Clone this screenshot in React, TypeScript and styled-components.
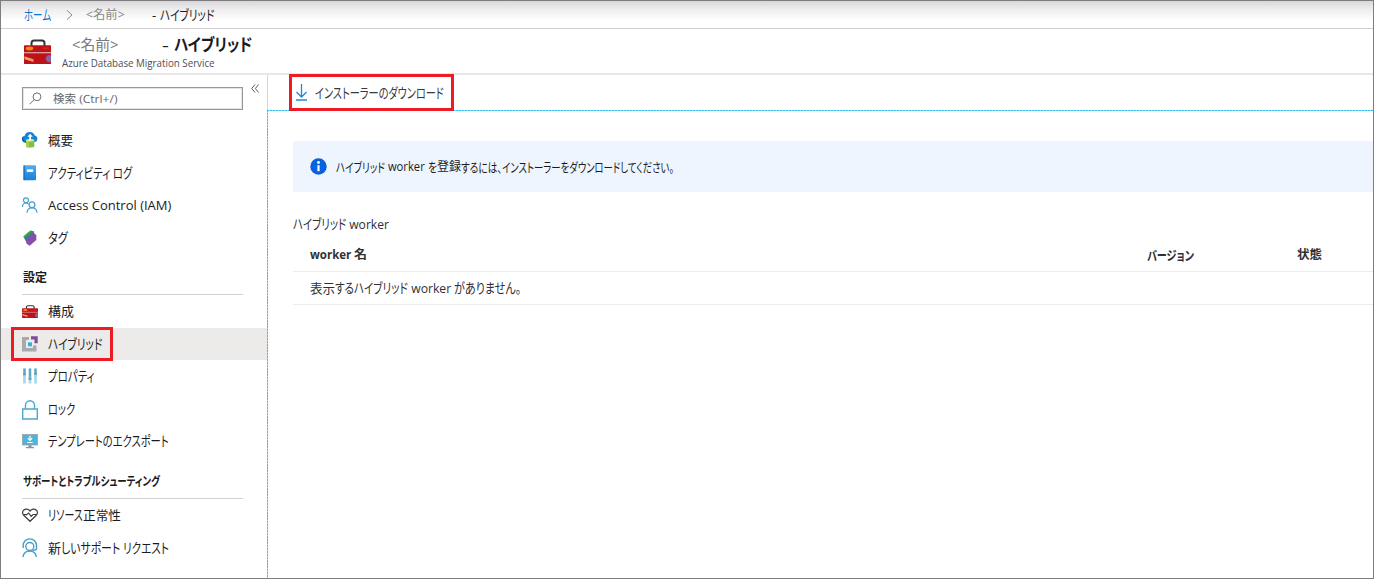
import React, { useLayoutEffect, useRef, useState } from "react";
import styled, { createGlobalStyle } from "styled-components";

const GlobalStyle = createGlobalStyle`
  * { box-sizing: border-box; }
  body { margin: 0; background: #fff; }
`;

const Page = styled.div`
  width: 1374px;
  height: 579px;
  border: 1px solid #7f7d80;
  background: #fff;
  color: #1b1b1f;
  font-family: "Open Sans", "Noto Sans CJK JP", sans-serif;
  font-size: 13px;
  display: flex;
  flex-direction: column;
  overflow: hidden;
`;

const Run = styled.span<{ $w: number }>`
  flex: none;
  display: block;
  width: ${(p) => p.$w}px;
  height: 20px;
  white-space: pre;
`;
const RunInner = styled.span<{ $kana: boolean }>`
  display: inline-block;
  transform-origin: left center;
  font-feature-settings: "palt";
  font-size: ${(p) => (p.$kana ? "1.08em" : "1em")};
  line-height: 20px;
  vertical-align: top;
`;
const Line = styled.span<{ $size?: number; $bold?: boolean; $color?: string; $ml?: number }>`
  display: flex;
  flex: none;
  line-height: 20px;
  font-size: ${(p) => p.$size ?? 13}px;
  font-weight: ${(p) => (p.$bold ? 700 : 400)};
  color: ${(p) => p.$color ?? "inherit"};
  margin-left: ${(p) => p.$ml ?? 0}px;
`;

const KANA = /^[\u3000-\u30ff\s]+$/;

function Fit({ w, children }: { w: number; children: string }) {
  const ref = useRef<HTMLSpanElement>(null);
  const [scale, setScale] = useState(1);
  useLayoutEffect(() => {
    if (ref.current) setScale(w / ref.current.offsetWidth);
  }, [w, children]);
  return (
    <Run $w={w}>
      <RunInner ref={ref} $kana={KANA.test(children)} style={{ transform: `scaleX(${scale})` }}>{children}</RunInner>
    </Run>
  );
}

type Seg = [string, number];
const Segs = ({ items }: { items: Seg[] }) => (
  <>{items.map(([t, w], i) => <Fit key={i} w={w}>{t}</Fit>)}</>
);

/* ---- header ---- */
const Breadcrumb = styled.nav`
  height: 28px;
  flex: none;
  display: flex;
  align-items: center;
  padding-left: 23px;
  border-bottom: 1px solid #d2d0d2;
  background: linear-gradient(#d9d7d9 0, #eeedee 8px, #fff 20px);
`;
const Chevron = styled.svg`
  flex: none;
  margin: 0 13px 0 15px;
`;
const Header = styled.header`
  height: 46px;
  flex: none;
  display: flex;
  padding: 7px 0 0 23px;
  border-bottom: 2px solid #e9e8e9;
`;
const HeaderIcon = styled.div`
  width: 38px;
  padding-top: 3px;
`;
const Titles = styled.div`
  display: flex;
  flex-direction: column;
`;
const TitleRow = styled.div`
  display: flex;
  height: 17px;
  align-items: center;
`;

/* ---- sidebar ---- */
const Body = styled.div`
  flex: 1;
  display: flex;
  min-height: 0;
`;
const Sidebar = styled.aside`
  width: 266px;
  flex: none;
`;
const SearchRow = styled.div`
  height: 49px;
  display: flex;
  align-items: flex-start;
  padding: 12px 0 0 21px;
`;
const SearchBox = styled.div`
  width: 221px;
  height: 23px;
  border: 1px solid #979797;
  outline: 1px solid #e4e4e4;
  outline-offset: -2px;
  display: flex;
  align-items: center;
  padding-left: 6px;
`;
const Collapse = styled.svg`
  margin: -3px 0 0 8px;
`;
const Item = styled.div<{ $active?: boolean }>`
  height: 32.5px;
  display: flex;
  align-items: center;
  padding-left: 21px;
  position: relative;
  background: ${(p) => (p.$active ? "#ecebea" : "transparent")};
`;
const IconSlot = styled.span`
  width: 26px;
  flex: none;
  display: flex;
  svg { display: block; overflow: visible; }
`;
const GroupTitle = styled.div<{ $h: number }>`
  width: 221px;
  height: ${(p) => p.$h}px;
  margin-left: 21px;
  padding: 0 0 6px 1px;
  display: flex;
  align-items: flex-end;
  border-bottom: 1px solid #d3d2d2;
`;
const Highlight = styled.span<{ $x: number; $y: number; $w: number; $h: number }>`
  position: absolute;
  left: ${(p) => p.$x}px;
  top: ${(p) => p.$y}px;
  width: ${(p) => p.$w}px;
  height: ${(p) => p.$h}px;
  border: 3px solid #ed1c24;
`;

/* ---- content ---- */
const Main = styled.main`
  flex: 1;
  min-width: 0;
  display: flex;
  flex-direction: column;
`;
const Toolbar = styled.div`
  height: 35px;
  flex: none;
  position: relative;
  display: flex;
  align-items: center;
  padding-left: 27px;
  border-left: 1px solid #d6d5d6;
`;
const Blade = styled.section`
  flex: 1;
  padding: 31px 0 0 26px;
  background:
    repeating-linear-gradient(90deg, #2fc0f0 0 2px, #9be0f6 2px 3px) top left / 100% 1px no-repeat,
    repeating-linear-gradient(#2fc0f0 0 2px, #9be0f6 2px 3px) top left / 1px 100% no-repeat;
`;
const Banner = styled.div`
  height: 51px;
  background: #eef5fe;
  display: flex;
  align-items: center;
  padding-left: 17px;
`;
const SectionTitle = styled.div`
  height: 42px;
  padding-top: 22px;
  display: flex;
`;
const Row = styled.div<{ $h: number; $drop?: number }>`
  height: ${(p) => p.$h}px;
  display: grid;
  grid-template-columns: 837px 150px 1fr;
  align-items: center;
  padding: ${(p) => p.$drop ?? 0}px 0 0 17px;
  border-bottom: 1px solid #eeedee;
`;

/* ---- icons ---- */
const Toolbox = ({ w, h }: { w: number; h: number }) => (
  <svg width={w} height={h} viewBox="0 0 27 24" preserveAspectRatio="none">
    <path d="M7.500 7V4a2.500 2.500 0 0 1 2.500-2.500h8A2.500 2.500 0 0 1 20.500 4v3" fill="none" stroke="#333439" strokeWidth="2" />
    <rect y="6" width="27" height="18" rx=".8" fill="#bd1218" />
    <path d="M0 12.700h27v1H0z" fill="#e6c3c2" />
    <ellipse cx="5.500" cy="9.200" rx="3.800" ry="1.900" fill="#f58a12" />
    <path d="M.5 16.500l9 3v2.500L.5 19.500z" fill="#f29a68" />
    <path d="M19 8h6v2h-6z" fill="#d32120" />
    <path d="M27 16a3.400 3.400 0 1 0 0 5.800z" fill="#8365ad" />
  </svg>
);
const CloudBox = () => (
  <svg width="16" height="16" viewBox="0 0 16 16">
    <path d="M3.200 10A3 3 0 0 1 2.600 4 5.300 5.300 0 0 1 12.800 3.600a3.300 3.300 0 0 1 .2 6.400z" fill="#1384d8" />
    <path d="M1.200 5.500a3 3 0 0 0 2 4.500h1.500" fill="none" stroke="#0b63b4" strokeWidth="1.500" />
    <path d="M4 8h8.300v6.600c0 1.300-8.300 1.300-8.300 0z" fill="#84bd4c" />
    <path d="M4 8h3v7.500c-1.800 0-3-.4-3-1z" fill="#a9cf46" />
    <ellipse cx="8.150" cy="8.200" rx="4.150" ry="1.300" fill="#d6ea8f" />
    <path d="M8.100 1.800l2.700 3H9V8.600H7.200V4.800H5.400z" fill="#fff" />
  </svg>
);
const Book = () => (
  <svg width="16" height="16" viewBox="0 0 16 16">
    <defs>
      <linearGradient id="book" x1="0" y1="0" x2="0" y2="1">
        <stop offset="0" stopColor="#5aaeea" /><stop offset=".5" stopColor="#2f93e4" /><stop offset="1" stopColor="#1d7fd8" />
      </linearGradient>
    </defs>
    <rect x="1.500" y=".3" width="12.500" height="15" rx=".8" fill="url(#book)" />
    <path d="M1.500.5h1.300v14.800H1.500z" fill="#1971c6" />
    <rect x="4.800" y="4.300" width="6.400" height="2.600" rx=".3" fill="#f3f9fe" />
  </svg>
);
const People = () => (
  <svg width="16" height="16" viewBox="0 0 16 16" fill="none" stroke="#459fcd" strokeWidth="1.200">
    <circle cx="4" cy="3.300" r="2.500" />
    <path d="M.4 10c.2-2.500 1.600-4 3.600-4 1.300 0 2.200.6 2.900 1.500" />
    <circle cx="10" cy="7.800" r="2.900" />
    <path d="M5 15.800c.2-3 2.200-5 5-5s4.800 2 5 5" />
  </svg>
);
const Tag = () => (
  <svg width="16" height="16" viewBox="0 0 16 16">
    <path d="M1.200 6.500L8.300.5l3.700.8v4L5 13z" fill="#3f9d42" />
    <path d="M2.500 8.500L10 2.200l2.500.8v5L6 14z" fill="#3d74b8" />
    <path d="M4 9.800L11.300 3.600l3 1.200V10L7.800 15.700 4.600 13.800z" fill="#8650a8" />
  </svg>
);
const Hybrid = () => (
  <svg width="16" height="16" viewBox="0 0 16 16">
    <path d="M0 1h7v3H4v8h7V9.500h3.500V15.500H0z" fill="#a9a9ab" />
    <path d="M9 .3h6.700v7h-3.200V3.600H9z" fill="#8049a0" />
    <path d="M5.500 5.500h5v5h-5z" fill="#e6f3f8" />
    <path d="M6 6.300h4v4H6z" fill="#35aee0" />
  </svg>
);
const Sliders = () => (
  <svg width="16" height="16" viewBox="0 0 16 16">
    <path d="M2.500.5v15M8 .5v15M13.500.5v15" stroke="#a9dbea" strokeWidth="2.800" />
    <path d="M2.500.5v5M8 .5v9M13.500.5v4.500" stroke="#52acd2" strokeWidth="2.200" />
    <path d="M1 6.300h3M6.500 10.800h3M12 5.800h3" stroke="#8b9194" strokeWidth="2" />
  </svg>
);
const Lock = () => (
  <svg width="16" height="20" viewBox="0 0 16 20" fill="none" stroke="#4da8d2" strokeWidth="1.400">
    <path d="M.7 10h14.600v10H.7zM3.500 10V6.200a4.500 4.500 0 0 1 9 0V10" />
  </svg>
);
const Monitor = () => (
  <svg width="16" height="16" viewBox="0 0 16 16">
    <rect x=".5" y="1.500" width="15" height="10.500" fill="#4fb4dc" stroke="#93a4aa" strokeWidth=".8" />
    <path d="M6.500 12.300h3v1.700h2.500v1.200H4V14h2.500z" fill="#8f8f8f" />
    <path d="M8 2.800v4M5.800 5.200L8 7.400l2.200-2.200M5.300 9.500h5.400" fill="none" stroke="#fff" strokeWidth="1.200" />
  </svg>
);
const Heart = () => (
  <svg width="16" height="16" viewBox="0 0 16 16" fill="none" stroke="#3d3d3f" strokeWidth="1.200">
    <path d="M8 14.300L1.700 8.200A3.500 3.500 0 0 1 1.600 3.200c2-1.800 4.700-1.300 6.400.8C9.700 1.900 12.400 1.400 14.400 3.200a3.500 3.500 0 0 1-.1 5z" />
    <path d="M2 7.700h2.600l2-1.700 2.500 3.400 2-1.900h3" />
  </svg>
);
const Support = () => (
  <svg width="16" height="19" viewBox="0 0 16 19" fill="none" stroke="#439dcd" strokeWidth="1.400">
    <circle cx="7.800" cy="8.500" r="4" />
    <path d="M1.200 10V7.500a6.500 6.500 0 0 1 13.300 0v3c0 1.500-1 1.800-4 1.800" />
    <path d="M1 19c.5-3.500 3-6 6.800-6s6 2.500 6.500 6" />
  </svg>
);

type NavItem = { icon: React.ReactNode; segs: Seg[]; active?: boolean };
const general: NavItem[] = [
  { icon: <CloudBox />, segs: [["概要", 25]] },
  { icon: <Book />, segs: [["アクティビティ ", 65], ["ログ", 19]] },
  { icon: <People />, segs: [["Access Control (IAM)", 123]] },
  { icon: <Tag />, segs: [["タグ", 20]] },
];
const settings: NavItem[] = [
  { icon: <Toolbox w={16} h={13} />, segs: [["構成", 26]] },
  { icon: <Hybrid />, segs: [["ハイブリッド", 54]], active: true },
  { icon: <Sliders />, segs: [["プロパティ", 47]] },
  { icon: <Lock />, segs: [["ロック", 27]] },
  { icon: <Monitor />, segs: [["テンプレートのエクスポート", 121]] },
];
const support: NavItem[] = [
  { icon: <Heart />, segs: [["リソース", 35], ["正常性", 38]] },
  { icon: <Support />, segs: [["新", 13], ["しいサポート ", 62], ["リクエスト", 46]] },
];

const NavList = ({ items }: { items: NavItem[] }) => (
  <>
    {items.map((it, i) => (
      <Item key={i} $active={it.active}>
        <IconSlot>{it.icon}</IconSlot>
        <Line><Segs items={it.segs} /></Line>
        {it.active && <Highlight $x={10} $y={-0.5} $w={102} $h={34} />}
      </Item>
    ))}
  </>
);

export default function App() {
  return (
    <Page>
      <GlobalStyle />
      <Breadcrumb>
        <Line $color="#0f74cf"><Fit w={27}>ホーム</Fit></Line>
        <Chevron width="7" height="10" viewBox="0 0 7 10" fill="none" stroke="#8a8a8c"><path d="M1 .5l5 4.500-5 4.500" /></Chevron>
        <Line $size={12} $color="#88868a"><Fit w={39}>{"<名前>"}</Fit></Line>
        <Line $ml={27}><Segs items={[["- ", 8], ["ハイブリッド", 54]]} /></Line>
      </Breadcrumb>
      <Header>
        <HeaderIcon><Toolbox w={27} h={25} /></HeaderIcon>
        <Titles>
          <TitleRow>
            <Line $size={14.5} $color="#79777b" $ml={10}><Fit w={47}>{"<名前>"}</Fit></Line>
            <Line $size={16} $ml={43}><Fit w={12}>{"- "}</Fit></Line>
            <Line $size={16} $bold><Fit w={78}>ハイブリッド</Fit></Line>
          </TitleRow>
          <Line $size={10} $color="#4f4e52"><Fit w={153}>Azure Database Migration Service</Fit></Line>
        </Titles>
      </Header>
      <Body>
        <Sidebar>
          <SearchRow>
            <SearchBox>
              <svg width="13" height="13" viewBox="0 0 13 13" fill="none" stroke="#6f6e72"><circle cx="8" cy="4.800" r="3.900" /><path d="M5.200 7.600L.5 12.300" /></svg>
              <Line $size={11.5} $color="#68676b" $ml={11}><Segs items={[["検索", 23], [" (Ctrl+/)", 42]]} /></Line>
            </SearchBox>
            <Collapse width="8" height="9" viewBox="0 0 8 9" fill="none" stroke="#5c5b5f"><path d="M4 .5L.7 4.500 4 8.500M7.600.5L4.300 4.500l3.300 4" /></Collapse>
          </SearchRow>
          <NavList items={general} />
          <GroupTitle $h={41}><Line $size={12} $bold><Fit w={24}>設定</Fit></Line></GroupTitle>
          <NavList items={settings} />
          <GroupTitle $h={41.5}><Line $size={11.5} $bold><Fit w={137}>サポートとトラブルシューティング</Fit></Line></GroupTitle>
          <NavList items={support} />
        </Sidebar>
        <Main>
          <Toolbar>
            <svg width="13" height="17" viewBox="0 0 13 17" fill="none" stroke="#2586d5" strokeWidth="1.300"><path d="M6.500 0v12.500M1.500 8l5 5 5-5M1 16h11" /></svg>
            <Line $ml={7} $color="#39383c"><Fit w={129}>インストーラーのダウンロード</Fit></Line>
            <Highlight $x={21} $y={-1} $w={165} $h={37} />
          </Toolbar>
          <Blade>
            <Banner>
              <svg width="17" height="17" viewBox="0 0 17 17"><circle cx="8.500" cy="8.500" r="8.200" fill="#0563df" /><circle cx="8.500" cy="4.500" r="1.400" fill="#fff" /><path d="M8.500 7.200v6" stroke="#fff" strokeWidth="2.200" /></svg>
              <Line $ml={9} $size={12}>
                <Segs items={[["ハイブリッド", 49], [" worker ", 43], ["を", 9], ["登録", 24], ["するには、", 41], ["インストーラーをダウンロードしてください。", 172]]} />
              </Line>
            </Banner>
            <SectionTitle>
              <Line $color="#303034"><Segs items={[["ハイブリッド", 53], [" worker", 43]]} /></Line>
            </SectionTitle>
            <Row $h={38} $drop={4}>
              <Line $size={12} $bold $color="#303034"><Segs items={[["worker ", 44], ["名", 13]]} /></Line>
              <Line $size={12} $bold $color="#303034"><Fit w={47}>バージョン</Fit></Line>
              <Line $size={12} $bold $color="#303034"><Fit w={25}>状態</Fit></Line>
            </Row>
            <Row $h={33}>
              <Line $color="#303034"><Segs items={[["表示", 25], ["するハイブリッド", 73], [" worker ", 46], ["がありません。", 67]]} /></Line>
            </Row>
          </Blade>
        </Main>
      </Body>
    </Page>
  );
}
